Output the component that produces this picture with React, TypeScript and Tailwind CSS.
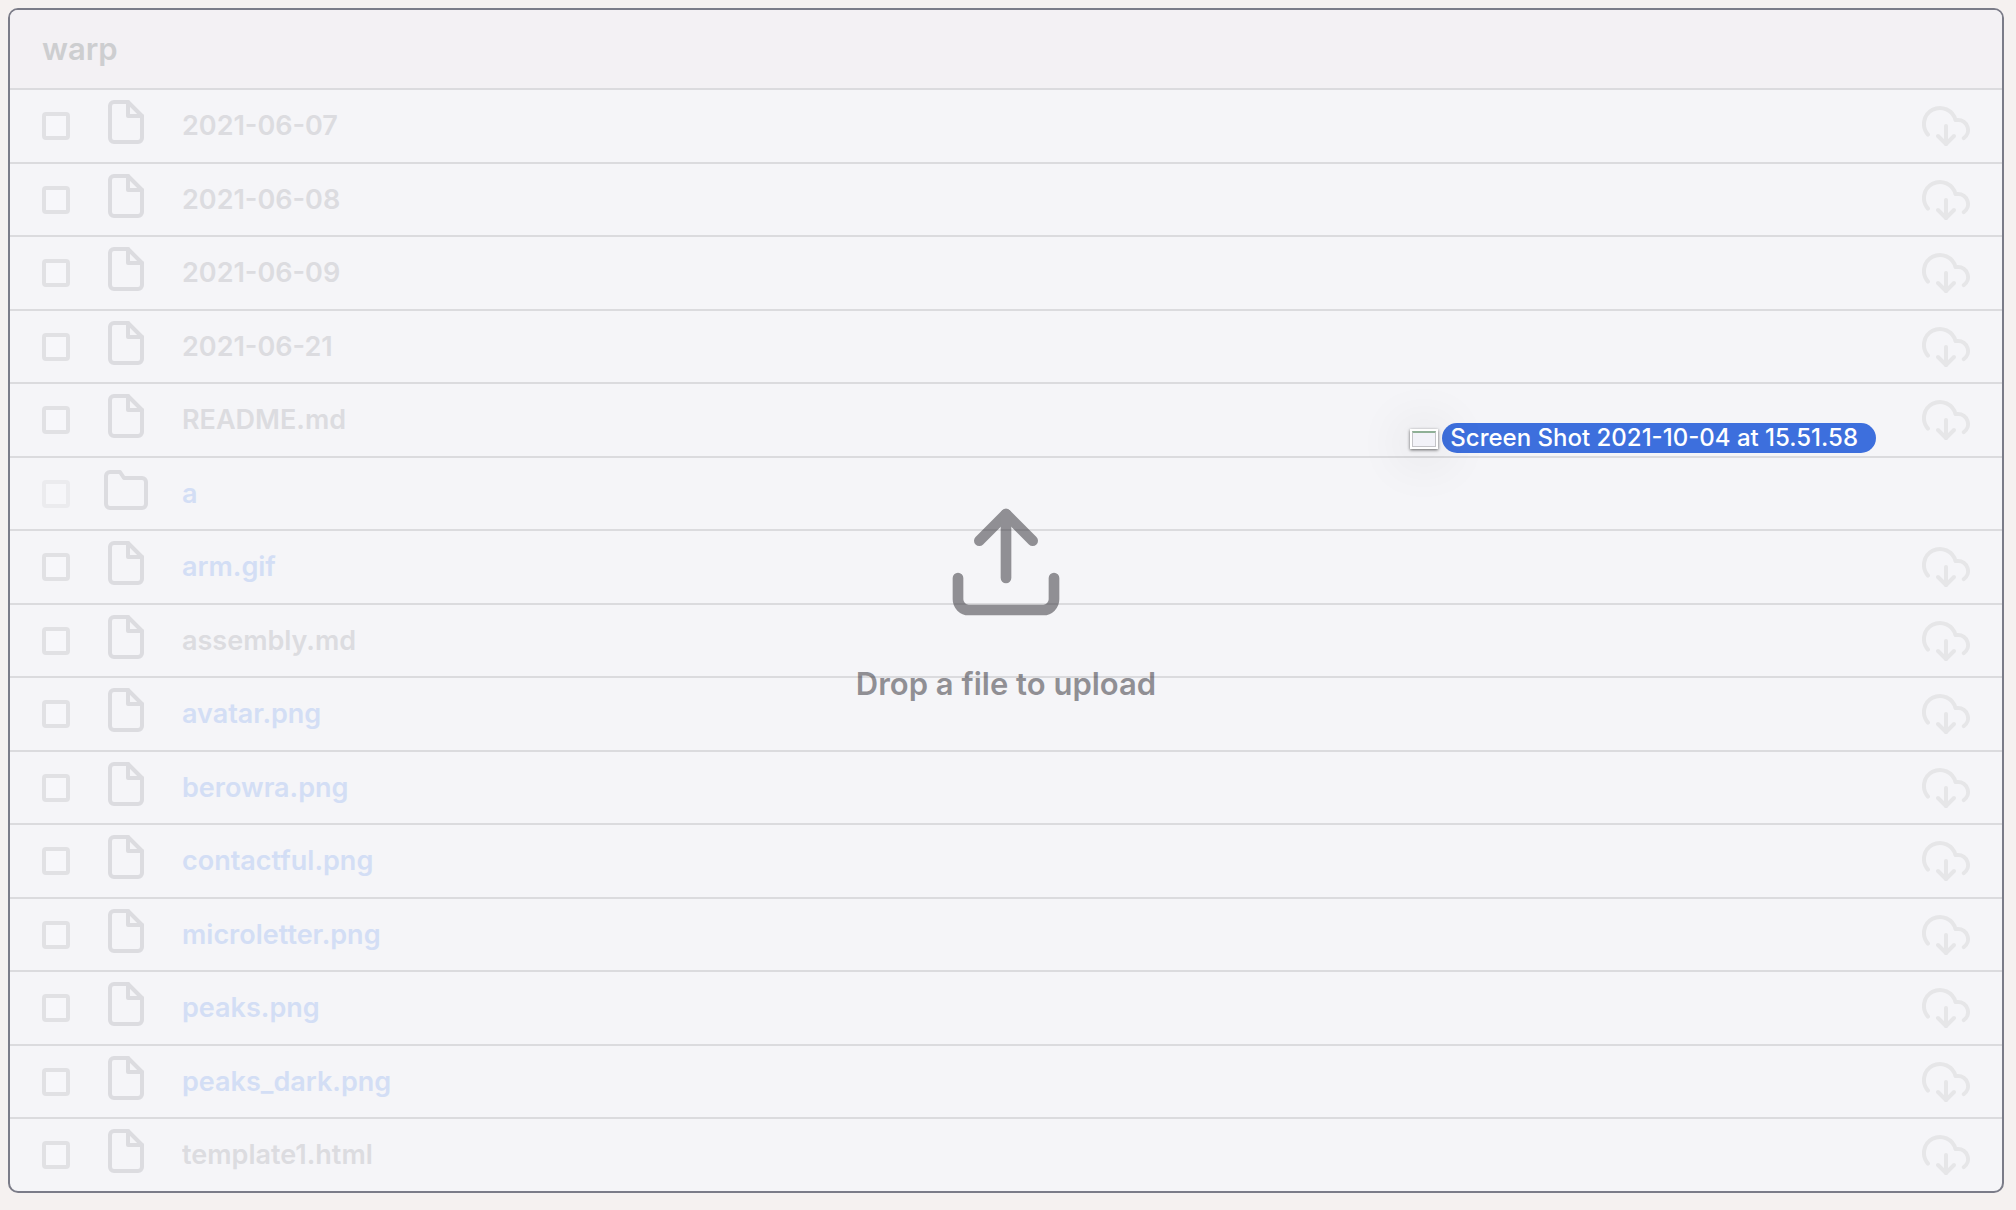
type Entry = { name: string; folder?: boolean; preview?: boolean };

const entries: Entry[] = [
  { name: "2021-06-07" },
  { name: "2021-06-08" },
  { name: "2021-06-09" },
  { name: "2021-06-21" },
  { name: "README.md" },
  { name: "a", folder: true, preview: true },
  { name: "arm.gif", preview: true },
  { name: "assembly.md" },
  { name: "avatar.png", preview: true },
  { name: "berowra.png", preview: true },
  { name: "contactful.png", preview: true },
  { name: "microletter.png", preview: true },
  { name: "peaks.png", preview: true },
  { name: "peaks_dark.png", preview: true },
  { name: "template1.html" },
];

const stroke = {
  viewBox: "0 0 24 24",
  fill: "none",
  stroke: "currentColor",
  strokeWidth: 2,
  strokeLinecap: "round",
  strokeLinejoin: "round",
  "aria-hidden": true,
} as const;

function FileIcon() {
  return (
    <svg {...stroke} className="size-12">
      <path d="M13 2H6a2 2 0 0 0-2 2v16a2 2 0 0 0 2 2h12a2 2 0 0 0 2-2V9z" />
      <polyline points="13 2 13 9 20 9" />
    </svg>
  );
}

function FolderIcon() {
  return (
    <svg {...stroke} className="size-12">
      <path d="M22 19a2 2 0 0 1-2 2H4a2 2 0 0 1-2-2V5a2 2 0 0 1 2-2h5l2 3h9a2 2 0 0 1 2 2z" />
    </svg>
  );
}

function DownloadIcon() {
  return (
    <svg {...stroke} className="size-12">
      <polyline points="8 17 12 21 16 17" />
      <line x1="12" y1="12" x2="12" y2="21" />
      <path d="M20.88 18.09A5 5 0 0 0 18 9h-1.26A8 8 0 1 0 3 16.29" />
    </svg>
  );
}

function UploadIcon() {
  return (
    <svg {...stroke} className="size-32">
      <path d="M21 15v4a2 2 0 0 1-2 2H5a2 2 0 0 1-2-2v-4" />
      <polyline points="17 8 12 3 7 8" />
      <line x1="12" y1="3" x2="12" y2="15" />
    </svg>
  );
}

function Row({ name, folder, preview }: Entry) {
  return (
    <li className="flex items-center gap-8 border-t-2 border-[#dbdbde] px-8 odd:h-[74px] even:h-[73px]">
      <input
        type="checkbox"
        aria-label={`Select ${name}`}
        disabled={folder}
        className="size-7 shrink-0 appearance-none rounded border-4 border-[#e1e1e4] bg-[#f7f7fa] disabled:border-[#ebebee] disabled:bg-[#f6f6f9]"
      />
      <span className="shrink-0 pb-2 text-[#dcdce0]">{folder ? <FolderIcon /> : <FileIcon />}</span>
      {preview ? (
        <a href={`#${name}`} className="min-w-0 flex-1 truncate text-[27px] leading-9 font-semibold text-[#d3def5]">
          {name}
        </a>
      ) : (
        <span className="min-w-0 flex-1 truncate text-[27px] leading-9 font-semibold text-[#dcdce0]">{name}</span>
      )}
      {!folder && (
        <button type="button" aria-label={`Download ${name}`} className="shrink-0 text-[#e6e6e8]">
          <DownloadIcon />
        </button>
      )}
    </li>
  );
}

function DragPreview() {
  return (
    <div className="absolute top-[413px] right-[126px] flex items-center gap-1">
      <span className="relative mt-0.5 h-5 w-7 border-2 border-white bg-white shadow-[0_1px_3px_rgba(0,0,0,0.6),0_4px_50px_10px_rgba(0,0,0,0.07)]">
        <span className="block h-full border border-t-2 border-[#c4c4c8] border-t-[#8fb096] bg-[#f2f2f8]" />
      </span>
      <span className="flex h-[30px] items-center rounded-full bg-[#3d6fdd] pr-[18px] pl-2 text-2xl font-medium whitespace-nowrap text-white">
        Screen Shot 2021-10-04 at 15.51.58
      </span>
    </div>
  );
}

export default function App() {
  return (
    <div className="min-h-screen bg-[#f5f1f0] pt-2 pr-3 pb-4 pl-2 font-['Inter','Liberation_Sans',sans-serif]">
      <main className="relative rounded-[10px] border-2 border-[#7b7c88] bg-[#f5f5f8]">
        <h1 className="flex h-[78px] items-center rounded-t-lg bg-[#f3f1f4] px-8 text-[31px] leading-9 font-semibold text-[#cdced0]">
          warp
        </h1>
        <ul>
          {entries.map((entry) => (
            <Row key={entry.name} {...entry} />
          ))}
        </ul>
        <div className="pointer-events-none absolute inset-0 flex flex-col items-center justify-center gap-10 pb-0.5 text-[#2d2c32] [&>*]:opacity-50">
          <UploadIcon />
          <p className="text-[31px] leading-9 font-semibold">Drop a file to upload</p>
        </div>
        <DragPreview />
      </main>
    </div>
  );
}
